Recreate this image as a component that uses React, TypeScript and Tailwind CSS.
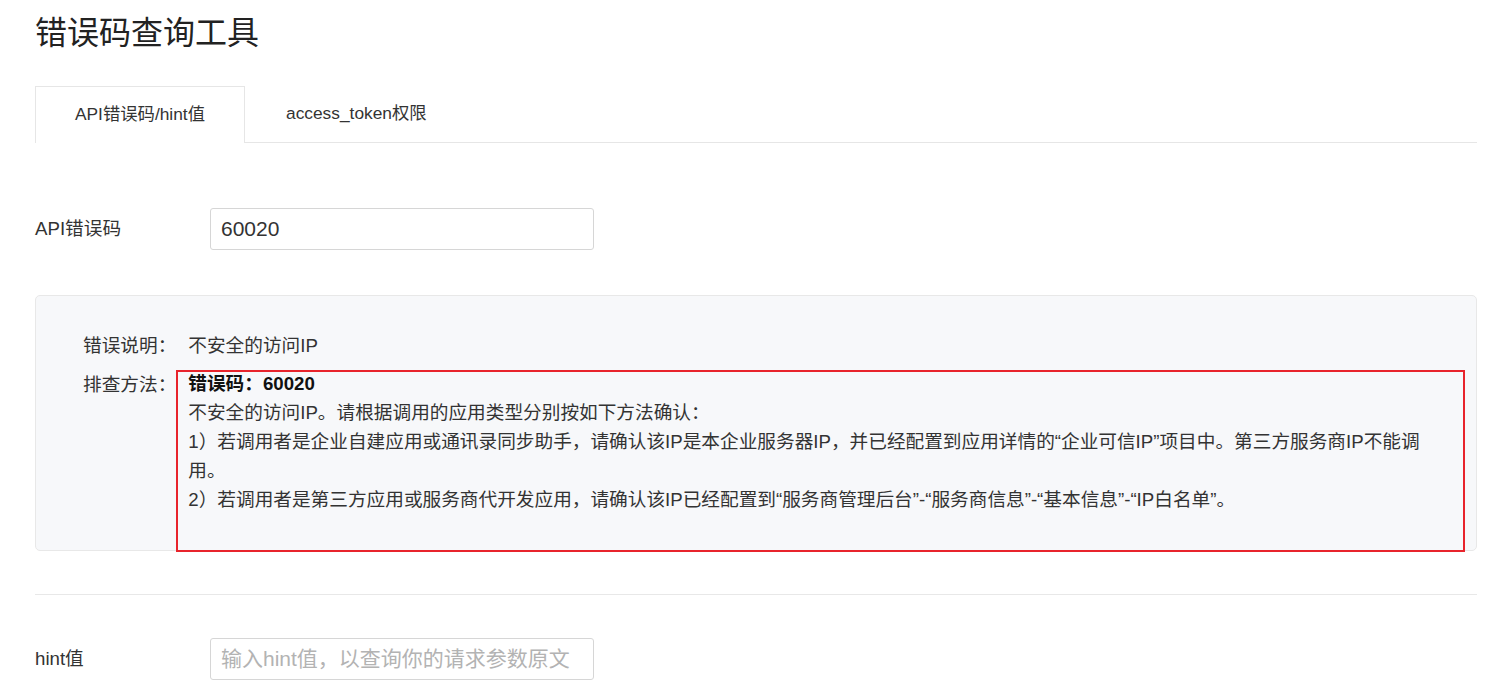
import React from 'react';

const font = { fontFamily: '"Liberation Sans", "Noto Sans CJK SC", sans-serif' };

const Tabs: React.FC = () => (
  <div className="mt-[29px] flex h-[57px] border-b border-[#e6e6e6]">
    <div className="-mb-px flex h-[57px] items-center border border-b-0 border-[#e6e6e6] bg-white px-[39px] text-[17.33px] text-[#333]">
      API错误码/hint值
    </div>
    <div className="flex items-center px-[41px] text-[17.33px] text-[#333]">access_token权限</div>
  </div>
);

const Field: React.FC<{ label: string; value?: string; placeholder?: string }> = ({ label, value, placeholder }) => (
  <div className="flex items-center">
    <div className="w-[175px] text-[18.67px] text-[#333]">{label}</div>
    <input
      readOnly
      defaultValue={value}
      placeholder={placeholder}
      className="h-[42px] w-[384px] rounded-[3px] border border-[#d6d6d6] bg-white px-[10px] text-[21px] text-[#333] outline-none placeholder:text-[#b3b3b3]"
      style={font}
    />
  </div>
);

export default function App() {
  return (
    <div className="min-h-screen bg-white pl-[35px] pr-[25px]" style={font}>
      <h1 className="pt-[9px] text-[32px] leading-[48px] font-normal text-[#222]">错误码查询工具</h1>

      <Tabs />

      <div className="mt-[65px]">
        <Field label="API错误码" value="60020" />
      </div>

      {/* 错误结果 */}
      <div className="mt-[45px] rounded-[5px] border border-[#e8e8e8] bg-[#f7f8fa] pl-[47px] pr-[11px] pt-[35px]">
        <div className="grid grid-cols-[auto_1fr] gap-y-[10px] text-[18.67px] leading-[29px] text-[#333]">
          <div>错误说明：</div>
          <div className="pl-[12px]">不安全的访问IP</div>
          <div>排查方法：</div>
          <div className="mb-[-2px] border-2 border-[#e8242c] pb-[36px] pl-[10px] pr-[30px]">
            <div className="-mt-[3px]">
              <div className="font-bold text-[#111]">错误码：60020</div>
              <div>不安全的访问IP。请根据调用的应用类型分别按如下方法确认：</div>
              <div>1）若调用者是企业自建应用或通讯录同步助手，请确认该IP是本企业服务器IP，并已经配置到应用详情的“企业可信IP”项目中。第三方服务商IP不能调用。</div>
              <div>2）若调用者是第三方应用或服务商代开发应用，请确认该IP已经配置到“服务商管理后台”-“服务商信息”-“基本信息”-“IP白名单”。</div>
            </div>
          </div>
        </div>
      </div>

      <div className="mt-[43px] border-t border-[#e8e8e8]" />

      <div className="mt-[43px]">
        <Field label="hint值" placeholder="输入hint值，以查询你的请求参数原文" />
      </div>
    </div>
  );
}
